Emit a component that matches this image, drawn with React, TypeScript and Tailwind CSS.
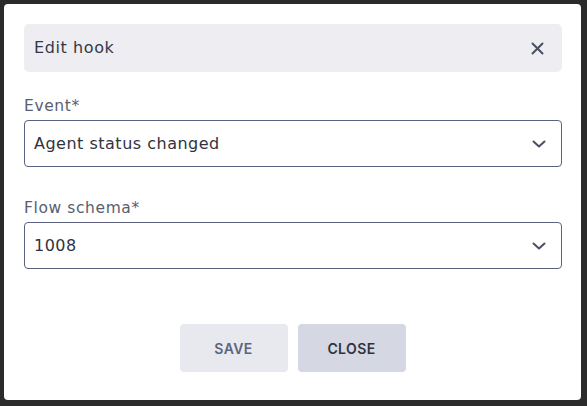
import React from "react";

const font = { fontFamily: '"DejaVu Sans", "Noto Sans", sans-serif' };
const btnFont = { fontFamily: '"Inter", "Noto Sans", sans-serif' };

function Chevron() {
  return (
    <svg width="14" height="8" viewBox="0 0 14 8" fill="none">
      <path d="M1.5 1.5L7 6.5L12.5 1.5" stroke="#4a4f61" strokeWidth="2" strokeLinecap="round" strokeLinejoin="round" />
    </svg>
  );
}

function Field({ label, value }: { label: string; value: string }) {
  return (
    <div className="flex flex-col">
      <div className="h-5 leading-5 text-[15.5px] tracking-[0.6px] text-[#5a5e6d] mb-1">{label}</div>
      <div className="h-[47px] border border-[#5b6280] rounded-[4px] flex items-center justify-between pl-[9px] pr-[15px]">
        <span className="text-[16px] tracking-[0.5px] text-[#30333d]">{value}</span>
        <Chevron />
      </div>
    </div>
  );
}

export default function App() {
  return (
    <div className="w-[587px] h-[406px] bg-[#2b2b2b] pt-1 pl-1" style={font}>
      <div className="w-[577px] h-[396px] bg-white rounded-[4px] flex flex-col pt-5 pl-5 pr-[19px]">
        <div className="h-12 rounded-[5px] bg-[#ededf2] flex items-center justify-between pl-[10px] pr-[18px]">
          <span className="text-[16px] tracking-[0.6px] text-[#343845]">Edit hook</span>
          <svg width="13" height="13" viewBox="0 0 13 13" fill="none">
            <path d="M1.5 1.5L11.5 11.5M11.5 1.5L1.5 11.5" stroke="#4a4f61" strokeWidth="2" strokeLinecap="round" />
          </svg>
        </div>
        <div className="mt-6">
          <Field label="Event*" value="Agent status changed" />
        </div>
        <div className="mt-[31px]">
          <Field label="Flow schema*" value="1008" />
        </div>
        <div className="mt-[55px] flex justify-center gap-[10px] pr-[1px]" style={btnFont}>
          <button className="w-[108px] h-12 rounded-[4px] bg-[#e8e9ef] text-[#5b6380] text-[14px] tracking-[0.4px] font-semibold">SAVE</button>
          <button className="w-[108px] h-12 rounded-[4px] bg-[#d5d8e2] text-[#2f3340] text-[14px] tracking-[0.4px] font-semibold">CLOSE</button>
        </div>
      </div>
    </div>
  );
}
